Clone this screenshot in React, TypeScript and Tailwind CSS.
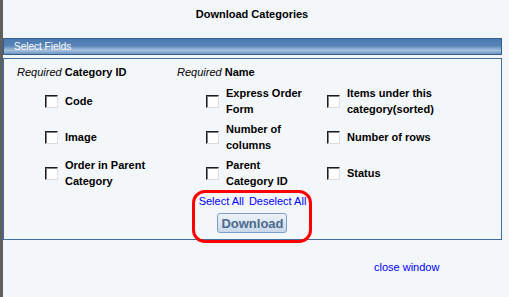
import React from "react";

const font = { fontFamily: '"Liberation Sans", Arial, sans-serif' };

function Field({ label }: { label: React.ReactNode }) {
  return (
    <div className="flex items-center">
      <span className="h-[13px] w-[13px] shrink-0 border border-[#1c1c1c] border-b-[#dcdcdc] border-r-[#dcdcdc] bg-white shadow-[inset_1px_1px_0_#808080]" />
      <span className="ml-[7px] whitespace-nowrap text-[11px] font-bold leading-4 text-black">
        {label}
      </span>
    </div>
  );
}

export default function App() {
  return (
    <div
      className="flex h-[297px] w-[509px] flex-col border-l-[3px] border-[#5f5f5f] bg-[#f4f7fa] text-black"
      style={font}
    >
      <div className="flex h-[38px] items-center justify-center pb-[10px] pr-[8px] text-[11px] font-bold">
        Download Categories
      </div>

      <div className="mr-[7px] flex h-[17px] items-center border border-[#2f5f94] bg-[linear-gradient(to_bottom,#4d7bb0_0%,#5684b8_45%,#a7c0dc_75%,#6f95c2_100%)] pl-[10px] text-[10px] text-white">
        Select Fields
      </div>

      <div className="mr-[7px] mt-[3px] flex h-[182px] flex-col border border-[#3d6ea4] px-[13px] pt-[5px]">
        <div className="flex h-4 items-center text-[11px] leading-4">
          <span className="w-[160px]">
            <i className="font-normal">Required</i> <b>Category ID</b>
          </span>
          <span>
            <i className="font-normal">Required</i> <b>Name</b>
          </span>
        </div>

        <div className="mt-[5px] grid grid-cols-[161px_121px_1fr] gap-y-1 pl-[28px]">
          <div className="flex h-8 items-center"><Field label="Code" /></div>
          <div className="flex h-8 items-center"><Field label={<>Express Order<br />Form</>} /></div>
          <div className="flex h-8 items-center"><Field label={<>Items under this<br />category(sorted)</>} /></div>
          <div className="flex h-8 items-center"><Field label="Image" /></div>
          <div className="flex h-8 items-center"><Field label={<>Number of<br />columns</>} /></div>
          <div className="flex h-8 items-center"><Field label="Number of rows" /></div>
          <div className="flex h-8 items-center"><Field label={<>Order in Parent<br />Category</>} /></div>
          <div className="flex h-8 items-center"><Field label={<>Parent<br />Category ID</>} /></div>
          <div className="flex h-8 items-center"><Field label="Status" /></div>
        </div>

        <div className="relative mx-auto mt-1 flex flex-col items-center">
          <div className="flex h-4 items-center gap-[5px] text-[11px] leading-4 text-[#0000ff]">
            <span>Select All</span>
            <span>Deselect All</span>
          </div>
          <button className="mt-1 h-5 w-[70px] rounded-[3px] border border-[#7f9fc8] bg-[linear-gradient(to_bottom,#eef3f9,#c9d8ea)] text-[13px] font-bold text-[#4d6a8c]">
            Download
          </button>
          <span className="absolute -top-[3px] left-1/2 h-[53px] w-[120px] -translate-x-1/2 rounded-[13px] border-[3px] border-[#ff0000]" />
        </div>
      </div>

      <div className="mt-[19px] pl-[371px] text-[11px] leading-4 text-[#0000ff]">close window</div>
    </div>
  );
}
